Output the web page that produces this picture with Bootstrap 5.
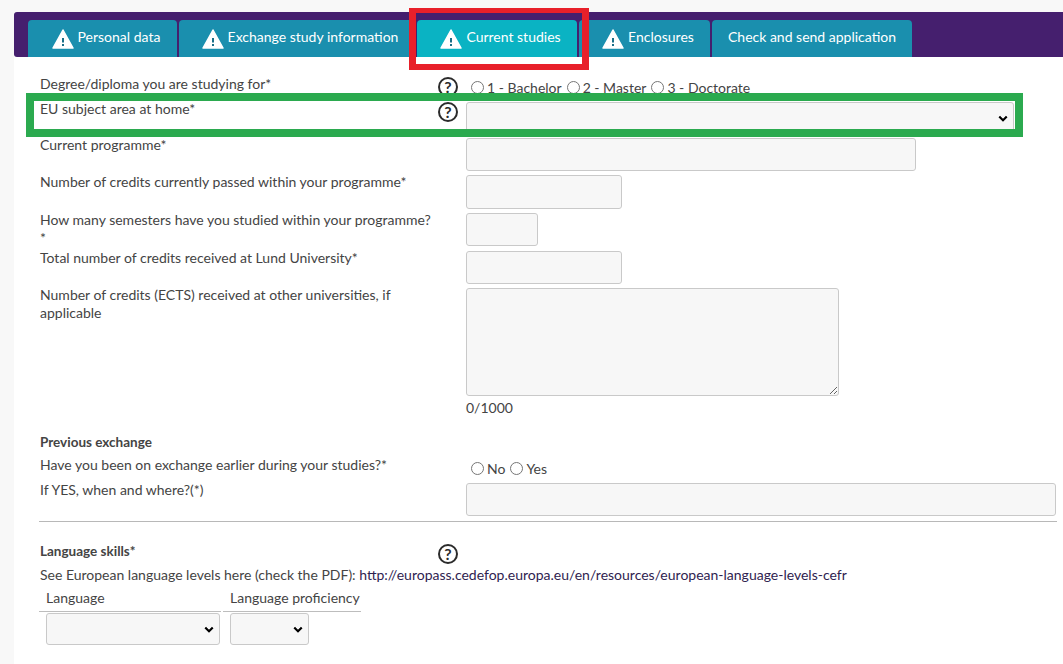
<!DOCTYPE html>
<html lang="en">
<head>
    <meta charset="UTF-8">
    <meta name="viewport" content="width=device-width, initial-scale=1.0">
    <title>Current studies</title>
    <link href="https://cdn.jsdelivr.net/npm/bootstrap@5.3.2/dist/css/bootstrap.min.css" rel="stylesheet">
    <script src="https://cdn.jsdelivr.net/npm/bootstrap@5.3.2/dist/js/bootstrap.bundle.min.js"></script>
    <style>
        html, body {
            height: 664px;
            overflow: hidden;
        }
        body {
            background-color: #f8f8f8;
            position: relative;
            font-family: "Lato", "Liberation Sans", sans-serif;
            font-size: 14px;
            line-height: 18px;
            color: #444;
        }
        .page-panel {
            margin: 12px 0 0 14px;
            height: 652px;
            background-color: #fff;
        }
        .tab-bar {
            height: 45px;
            padding: 8px 0 0 14px;
            background-color: #451f6e;
            border-top-left-radius: 3px;
            border-bottom-left-radius: 3px;
            gap: 2px;
        }
        .tab-bar .nav-link {
            height: 37px;
            display: flex;
            align-items: center;
            justify-content: center;
            gap: 4px;
            padding: 0 0 3px;
            color: #fff;
            font-size: 14px;
            background-color: #1a8fae;
            border-radius: 4px 4px 0 0;
        }
        .tab-bar .nav-link.active {
            background-color: #0ab3c3;
        }
        .tab-bar .nav-link.warn-tab {
            padding-left: 7px;
        }
        .tab-a { width: 149px; }
        .tab-b { width: 235px; margin-right: 1px; }
        .tab-c { width: 160px; }
        .tab-d { width: 131px; }
        .tab-e { width: 200px; }
        .warn-icon {
            width: 22px;
            height: 20px;
            margin-top: 4px;
            flex: none;
        }
        .form-area {
            padding: 17px 6px 0 26px;
        }
        .field-label {
            width: 398px;
            padding-top: 1px;
            flex: none;
        }
        .help-col {
            width: 28px;
            padding-top: 3px;
            flex: none;
        }
        .help-mark {
            display: block;
            width: 20px;
            height: 20px;
            border: 2px solid #2b2b2b;
            border-radius: 50%;
            font-size: 16px;
            font-weight: 700;
            line-height: 16px;
            text-align: center;
            color: #2b2b2b;
        }
        .field-col {
            flex: 1;
            min-width: 0;
            padding-top: 3px;
        }
        .field-col .form-control,
        .field-col .form-select,
        .lang-table .form-select {
            height: 33px;
            min-height: 0;
            padding: 4px 8px;
            font-size: 14px;
            background-color: #f7f7f7;
            border-color: #c9c9c9;
            border-radius: 3px;
        }
        .form-select {
            background-image: url("data:image/svg+xml,%3csvg xmlns='http://www.w3.org/2000/svg' viewBox='0 0 12 8'%3e%3cpath fill='none' stroke='%23000' stroke-width='2.6' d='M1.5 1.5 6 6l4.5-4.5'/%3e%3c/svg%3e");
            background-size: 10px 7px;
            background-position: right 5px center;
        }
        .choice-line {
            display: flex;
            align-items: center;
            padding: 3px 0 0 5px;
            height: 23px;
        }
        .choice-line input {
            margin: 0 3px 0 0;
            width: 13px;
            height: 13px;
        }
        .choice-line label {
            margin-right: 5px;
            padding-top: 2px;
        }
        .w-select-wide { width: 548px; }
        .w-programme { width: 450px; }
        .w-credits { width: 156px; }
        .w-semesters { width: 72px; }
        .w-comments { width: 373px; height: 108px !important; }
        .w-where { width: 590px; }
        .row-one { height: 25px; }
        .row-subject { height: 36px; }
        .row-programme { height: 37px; }
        .row-passed { height: 38px; }
        .field-col .form-control.tall-input { height: 34px; }
        .row-semesters { height: 38px; }
        .row-total { height: 37px; }
        .char-count {
            margin-top: 3px;
        }
        .group-title {
            font-size: 13.5px;
            font-weight: 700;
            margin: 0;
        }
        .title-exchange { margin-top: 16px; }
        .row-been { height: 29px; padding-top: 4px; }
        .row-where { height: 38px; }
        .section-rule {
            margin: 3px 0 0 -1px;
            border-color: #b8b8b8;
            opacity: 1;
        }
        .lang-head {
            height: 44px;
            padding-top: 19px;
        }
        .lang-link a {
            color: #2f2350;
            text-decoration: none;
        }
        .lang-table {
            margin-top: 1px;
            border-collapse: separate;
            border-spacing: 2px 0;
            margin-left: -3px;
        }
        .lang-table th {
            font-weight: 400;
            padding: 4px 0 4px 7px;
            border-bottom: 1px solid #bdbdbd;
        }
        .lang-table td {
            padding: 1px 0 0 7px;
        }
        .lang-table .form-select { height: 32px; }
        .select-lang { width: 174px; }
        .select-level { width: 79px; }
        .th-lang { width: 182px; }
        .th-level { width: 138px; }
        .mark-red {
            position: absolute;
            left: 409px;
            top: 8px;
            width: 180px;
            height: 62px;
            border: solid #e8202a;
            border-width: 5px 7px 6px;
            pointer-events: none;
        }
        .mark-green {
            position: absolute;
            left: 26px;
            top: 93px;
            width: 997px;
            height: 44px;
            border: 8px solid #2baa4f;
            pointer-events: none;
        }
    </style>
</head>
<body>

    <div class="page-panel">
        <!-- tabs -->
        <ul class="nav tab-bar">
            <li class="nav-item"><a class="nav-link warn-tab tab-a" href="#"><svg class="warn-icon" viewBox="0 0 22 20"><path d="M11 1 L21 19 H1 Z" fill="#fff" stroke="#fff" stroke-width="1.5" stroke-linejoin="round"/><rect x="10" y="9" width="2" height="4.5" fill="#1a6f88"/><rect x="10" y="15" width="2" height="2" fill="#1a6f88"/></svg>Personal data</a></li>
            <li class="nav-item"><a class="nav-link warn-tab tab-b" href="#"><svg class="warn-icon" viewBox="0 0 22 20"><path d="M11 1 L21 19 H1 Z" fill="#fff" stroke="#fff" stroke-width="1.5" stroke-linejoin="round"/><rect x="10" y="9" width="2" height="4.5" fill="#1a6f88"/><rect x="10" y="15" width="2" height="2" fill="#1a6f88"/></svg>Exchange study information</a></li>
            <li class="nav-item"><a class="nav-link warn-tab tab-c active" href="#"><svg class="warn-icon" viewBox="0 0 22 20"><path d="M11 1 L21 19 H1 Z" fill="#fff" stroke="#fff" stroke-width="1.5" stroke-linejoin="round"/><rect x="10" y="9" width="2" height="4.5" fill="#1a6f88"/><rect x="10" y="15" width="2" height="2" fill="#1a6f88"/></svg>Current studies</a></li>
            <li class="nav-item"><a class="nav-link warn-tab tab-d" href="#"><svg class="warn-icon" viewBox="0 0 22 20"><path d="M11 1 L21 19 H1 Z" fill="#fff" stroke="#fff" stroke-width="1.5" stroke-linejoin="round"/><rect x="10" y="9" width="2" height="4.5" fill="#1a6f88"/><rect x="10" y="15" width="2" height="2" fill="#1a6f88"/></svg>Enclosures</a></li>
            <li class="nav-item"><a class="nav-link tab-e" href="#">Check and send application</a></li>
        </ul>

        <div class="form-area">
            <div class="d-flex row-one">
                <div class="field-label">Degree/diploma you are studying for*</div>
                <div class="help-col"><span class="help-mark">?</span></div>
                <div class="choice-line">
                    <input type="radio" name="degree" id="deg1"><label for="deg1">1 - Bachelor</label>
                    <input type="radio" name="degree" id="deg2"><label for="deg2">2 - Master</label>
                    <input type="radio" name="degree" id="deg3"><label for="deg3">3 - Doctorate</label>
                </div>
            </div>
            <div class="d-flex row-subject">
                <div class="field-label">EU subject area at home*</div>
                <div class="help-col"><span class="help-mark">?</span></div>
                <div class="field-col"><select class="form-select w-select-wide"><option></option></select></div>
            </div>
            <div class="d-flex row-programme">
                <div class="field-label">Current programme*</div>
                <div class="help-col"></div>
                <div class="field-col"><input class="form-control w-programme" type="text"></div>
            </div>
            <div class="d-flex row-passed">
                <div class="field-label">Number of credits currently passed within your programme*</div>
                <div class="help-col"></div>
                <div class="field-col"><input class="form-control tall-input w-credits" type="text"></div>
            </div>
            <div class="d-flex row-semesters">
                <div class="field-label">How many semesters have you studied within your programme?<br>*</div>
                <div class="help-col"></div>
                <div class="field-col"><input class="form-control w-semesters" type="text"></div>
            </div>
            <div class="d-flex row-total">
                <div class="field-label">Total number of credits received at Lund University*</div>
                <div class="help-col"></div>
                <div class="field-col"><input class="form-control w-credits" type="text"></div>
            </div>
            <div class="d-flex">
                <div class="field-label">Number of credits (ECTS) received at other universities, if applicable</div>
                <div class="help-col"></div>
                <div class="field-col">
                    <textarea class="form-control w-comments"></textarea>
                    <div class="char-count">0/1000</div>
                </div>
            </div>

            <p class="group-title title-exchange">Previous exchange</p>
            <div class="d-flex row-been">
                <div class="field-label">Have you been on exchange earlier during your studies?*</div>
                <div class="help-col"></div>
                <div class="choice-line">
                    <input type="radio" name="earlier" id="ex-no"><label for="ex-no">No</label>
                    <input type="radio" name="earlier" id="ex-yes"><label for="ex-yes">Yes</label>
                </div>
            </div>
            <div class="d-flex row-where">
                <div class="field-label">If YES, when and where?(*)</div>
                <div class="help-col"></div>
                <div class="field-col"><input class="form-control w-where" type="text"></div>
            </div>
            <hr class="section-rule">

            <div class="d-flex lang-head">
                <div class="field-label group-title">Language skills*</div>
                <div class="help-col"><span class="help-mark">?</span></div>
            </div>
            <div class="lang-link">See European language levels here (check the PDF): <a href="#">http://europass.cedefop.europa.eu/en/resources/european-language-levels-cefr</a></div>
            <table class="lang-table">
                <thead>
                    <tr><th class="th-lang">Language</th><th class="th-level">Language proficiency</th></tr>
                </thead>
                <tbody>
                    <tr>
                        <td><select class="form-select select-lang"><option></option></select></td>
                        <td><select class="form-select select-level"><option></option></select></td>
                    </tr>
                </tbody>
            </table>
        </div>
    </div>

    <!-- annotations drawn on top of the screenshot -->
    <div class="mark-red"></div>
    <div class="mark-green"></div>

</body>
</html>
